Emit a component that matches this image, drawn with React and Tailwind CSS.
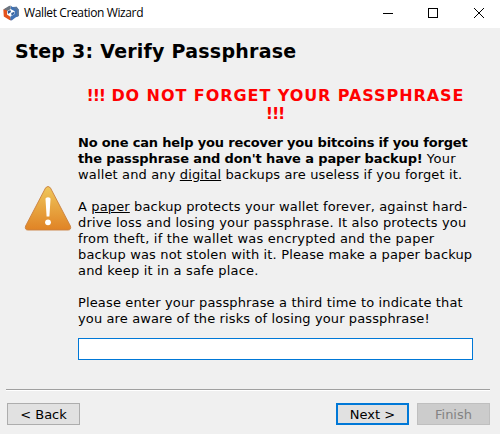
import React, { useState } from 'react';

const WalletIcon = () => (
  <svg className="w-4 h-4 shrink-0" viewBox="0 0 16 16">
    {/* left link, orange with a slate top */}
    <path d="M0.3 4.5 L3 3.2 L4 5 V9.5 L7 11.5 L8.3 15.3 L6.5 15 L0.8 11.5 Z" fill="#e4531c" />
    <path d="M0.3 4.6 L5.5 1.2 L7.5 0.5 L7.8 4 L4.5 6 L3 5 Z" fill="#6a7480" />
    {/* right link, blue */}
    <path d="M7.8 0.7 L9.5 2 L13.5 1.8 L15.7 4.5 V11 L12.5 12.5 L9 15.3 L7.5 15.5 L7.2 11.8 L11.7 9 V6.2 L8 4.2 Z" fill="#3f72b5" />
    <path d="M13.5 1.8 L15.7 4.5 V11 L14 11.8 V5 L10 2.5 Z" fill="#5b7799" />
    <path d="M4.6 6.2 L7.3 5 L8 7 L5 9 Z" fill="#2c5b98" />
    <path d="M8.2 8 L11.3 6.8 V9 L8.5 10.8 Z" fill="#35639f" />
  </svg>
);

const WarningIcon = () => (
  <svg className="w-[48px] h-[46px] shrink-0" viewBox="0 0 48 46">
    <defs>
      <linearGradient id="warn" x1="0" y1="0" x2="0" y2="1">
        <stop offset="0" stopColor="#efc75c" />
        <stop offset="1" stopColor="#e08325" />
      </linearGradient>
    </defs>
    <path
      d="M21.6 1.8 Q24 -1 26.4 1.8 L46.4 40 Q47.6 43.8 44.2 44 H3.8 Q0.4 43.8 1.6 40 Z"
      fill="url(#warn)"
      stroke="#c9803f"
      strokeWidth="0.9"
    />
    <path d="M21.5 12.8 Q21.6 11.3 24 11.3 Q26.4 11.3 26.5 12.8 L25.4 30.5 H22.6 Z" fill="#fff" />
    <circle cx="24" cy="36.3" r="2.9" fill="#fff" />
  </svg>
);

const TitleBar = () => (
  <header className="flex h-7 items-center bg-white pl-[3px] pb-[3px]">
    <WalletIcon />
    <span className="ml-[5px] font-['Open_Sans',sans-serif] text-[12px] tracking-[-0.38px]">
      Wallet Creation Wizard
    </span>
    <svg className="ml-auto mr-[14px] h-3 w-[106px]" viewBox="0 0 106 12" fill="none" stroke="#000" shapeRendering="crispEdges">
      <path d="M3 6.5 H13" />
      <rect x="48.5" y="1.5" width="9" height="9" />
      <path d="M94 1 L104 11 M104 1 L94 11" shapeRendering="auto" />
    </svg>
  </header>
);

const WalletWizard = () => {
  const [passphrase, setPassphrase] = useState('');

  return (
    <div className="flex h-[434px] w-[500px] flex-col overflow-hidden bg-[#f0f0f0] font-['DejaVu_Sans',sans-serif] text-[13px] leading-4 text-black">
      <TitleBar />
      <h1 className="mt-[11px] h-6 pl-[15px] text-[19px] font-bold leading-6 tracking-[0.24px] whitespace-nowrap">
        Step 3: Verify Passphrase
      </h1>

      <main className="flex pl-6">
        <div className="w-[54px] shrink-0 pt-[123px]">
          <WarningIcon />
        </div>
        <div className="w-[395px] pt-6 whitespace-nowrap">
          <h2 className="text-center text-[16px] font-bold leading-[18px] text-[#ff0000]">
            <div className="tracking-[0.93px]">
              <span className="tracking-[-1.2px]">!!!</span> DO NOT FORGET YOUR PASSPHRASE
            </div>
            <div className="pr-px tracking-[-1.1px]">!!!</div>
          </h2>
          <p className="mt-3">
            <b className="block tracking-[-0.17px]">No one can help you recover you bitcoins if you forget</b>
            <span className="block">
              <b className="tracking-[-0.13px]">the passphrase and don't have a paper backup!</b>{' '}
              <span className="tracking-[0.4px]">Your</span>
            </span>
            <span className="block tracking-[0.14px]">
              wallet and any <u>digital</u> backups are useless if you forget it.
            </span>
          </p>
          <p className="mt-4">
            <span className="block tracking-[0.14px]">
              A <u>paper</u> backup protects your wallet forever, against hard-
            </span>
            <span className="block tracking-[0.17px]">drive loss and losing your passphrase. It also protects you</span>
            <span className="block tracking-[0.2px]">from theft, if the wallet was encrypted and the paper</span>
            <span className="block tracking-[0.15px]">backup was not stolen with it. Please make a paper backup</span>
            <span className="block tracking-[0.18px]">and keep it in a safe place.</span>
          </p>
          <p className="mt-4">
            <span className="block tracking-[0.14px]">Please enter your passphrase a third time to indicate that</span>
            <span className="block tracking-[0.12px]">you are aware of the risks of losing your passphrase!</span>
          </p>
          <input
            type="password"
            value={passphrase}
            onChange={(e) => setPassphrase(e.target.value)}
            className="mt-[11px] block h-[22px] w-[395px] border border-[#0078d7] bg-white px-1 outline-none"
          />
        </div>
      </main>

      {/* Footer buttons */}
      <footer className="mt-auto mb-[9px] ml-[6px] mr-[10px] flex border-t border-[#a0a0a0]">
        <div className="flex flex-1 border-t border-white pt-3 pl-px">
          <button className="h-[22px] w-[73px] border border-[#adadad] bg-[#e1e1e1] pt-px">&lt; Back</button>
          <button className="ml-auto h-[22px] w-[73px] border-2 border-[#0078d7] bg-[#e1e1e1] pt-px">Next &gt;</button>
          <button disabled className="ml-2 h-[22px] w-[73px] border border-[#bfbfbf] bg-[#cccccc] pt-px text-[#838383]">
            Finish
          </button>
        </div>
      </footer>
    </div>
  );
};

export default WalletWizard;
